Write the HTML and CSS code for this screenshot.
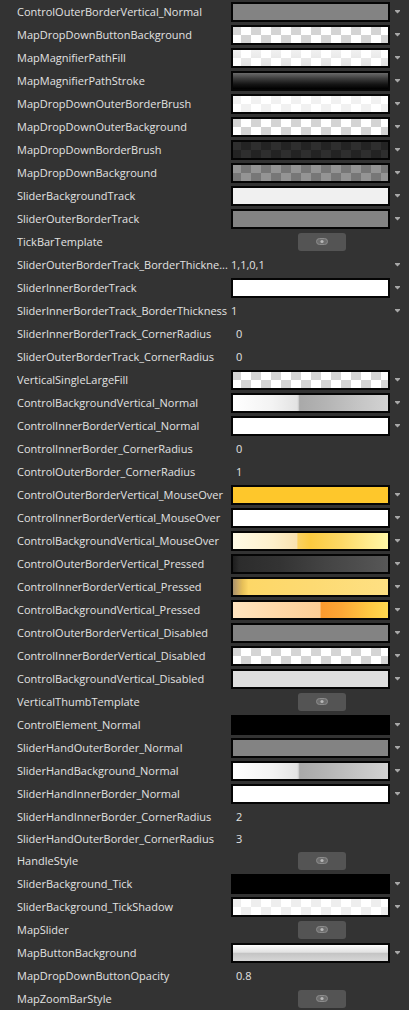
FILE: index.html
```html
<!DOCTYPE html>
<html>
<head>
<meta charset="utf-8">
<link rel="stylesheet" href="styles.css">
</head>
<body>
<div class="list">
  <div class="row"><span class="label">ControlOuterBorderVertical_Normal</span><span class="sw gray"></span><svg class="arrow" viewBox="0 0 5 4"><path d="M0 0H5V1L2.5 3.5L0 1Z"/></svg></div>
  <div class="row"><span class="label">MapDropDownButtonBackground</span><span class="sw chk"></span><svg class="arrow" viewBox="0 0 5 4"><path d="M0 0H5V1L2.5 3.5L0 1Z"/></svg></div>
  <div class="row"><span class="label">MapMagnifierPathFill</span><span class="sw chk-fade"></span><svg class="arrow" viewBox="0 0 5 4"><path d="M0 0H5V1L2.5 3.5L0 1Z"/></svg></div>
  <div class="row"><span class="label">MapMagnifierPathStroke</span><span class="sw stroke"></span><svg class="arrow" viewBox="0 0 5 4"><path d="M0 0H5V1L2.5 3.5L0 1Z"/></svg></div>
  <div class="row"><span class="label">MapDropDownOuterBorderBrush</span><span class="sw chk-faint"></span><svg class="arrow" viewBox="0 0 5 4"><path d="M0 0H5V1L2.5 3.5L0 1Z"/></svg></div>
  <div class="row"><span class="label">MapDropDownOuterBackground</span><span class="sw chk"></span><svg class="arrow" viewBox="0 0 5 4"><path d="M0 0H5V1L2.5 3.5L0 1Z"/></svg></div>
  <div class="row"><span class="label">MapDropDownBorderBrush</span><span class="sw chk-dark"></span><svg class="arrow" viewBox="0 0 5 4"><path d="M0 0H5V1L2.5 3.5L0 1Z"/></svg></div>
  <div class="row"><span class="label">MapDropDownBackground</span><span class="sw chk-mid"></span><svg class="arrow" viewBox="0 0 5 4"><path d="M0 0H5V1L2.5 3.5L0 1Z"/></svg></div>
  <div class="row"><span class="label">SliderBackgroundTrack</span><span class="sw offwhite"></span><svg class="arrow" viewBox="0 0 5 4"><path d="M0 0H5V1L2.5 3.5L0 1Z"/></svg></div>
  <div class="row"><span class="label">SliderOuterBorderTrack</span><span class="sw gray"></span><svg class="arrow" viewBox="0 0 5 4"><path d="M0 0H5V1L2.5 3.5L0 1Z"/></svg></div>
  <div class="row"><span class="label">TickBarTemplate</span><span class="btn"><svg class="btn-icon" viewBox="0 0 12 7"><rect x="0.5" y="0.5" width="11" height="6" rx="3" class="pill"/><circle cx="6" cy="3.5" r="1.6" class="dot"/></svg></span></div>
  <div class="row"><span class="label">SliderOuterBorderTrack_BorderThickne...</span><span class="val dd">1,1,0,1</span><svg class="arrow" viewBox="0 0 5 4"><path d="M0 0H5V1L2.5 3.5L0 1Z"/></svg></div>
  <div class="row"><span class="label">SliderInnerBorderTrack</span><span class="sw white"></span><svg class="arrow" viewBox="0 0 5 4"><path d="M0 0H5V1L2.5 3.5L0 1Z"/></svg></div>
  <div class="row"><span class="label">SliderInnerBorderTrack_BorderThickness</span><span class="val dd">1</span><svg class="arrow" viewBox="0 0 5 4"><path d="M0 0H5V1L2.5 3.5L0 1Z"/></svg></div>
  <div class="row"><span class="label">SliderInnerBorderTrack_CornerRadius</span><span class="val num">0</span></div>
  <div class="row"><span class="label">SliderOuterBorderTrack_CornerRadius</span><span class="val num">0</span></div>
  <div class="row"><span class="label">VerticalSingleLargeFill</span><span class="sw chk"></span><svg class="arrow" viewBox="0 0 5 4"><path d="M0 0H5V1L2.5 3.5L0 1Z"/></svg></div>
  <div class="row"><span class="label">ControlBackgroundVertical_Normal</span><span class="sw grad-normal"></span><svg class="arrow" viewBox="0 0 5 4"><path d="M0 0H5V1L2.5 3.5L0 1Z"/></svg></div>
  <div class="row"><span class="label">ControlInnerBorderVertical_Normal</span><span class="sw white"></span><svg class="arrow" viewBox="0 0 5 4"><path d="M0 0H5V1L2.5 3.5L0 1Z"/></svg></div>
  <div class="row"><span class="label">ControlInnerBorder_CornerRadius</span><span class="val num">0</span></div>
  <div class="row"><span class="label">ControlOuterBorder_CornerRadius</span><span class="val num">1</span></div>
  <div class="row"><span class="label">ControlOuterBorderVertical_MouseOver</span><span class="sw yellow"></span><svg class="arrow" viewBox="0 0 5 4"><path d="M0 0H5V1L2.5 3.5L0 1Z"/></svg></div>
  <div class="row"><span class="label">ControlInnerBorderVertical_MouseOver</span><span class="sw white"></span><svg class="arrow" viewBox="0 0 5 4"><path d="M0 0H5V1L2.5 3.5L0 1Z"/></svg></div>
  <div class="row"><span class="label">ControlBackgroundVertical_MouseOver</span><span class="sw grad-over"></span><svg class="arrow" viewBox="0 0 5 4"><path d="M0 0H5V1L2.5 3.5L0 1Z"/></svg></div>
  <div class="row"><span class="label">ControlOuterBorderVertical_Pressed</span><span class="sw grad-dark"></span><svg class="arrow" viewBox="0 0 5 4"><path d="M0 0H5V1L2.5 3.5L0 1Z"/></svg></div>
  <div class="row"><span class="label">ControlInnerBorderVertical_Pressed</span><span class="sw grad-inner-pressed"></span><svg class="arrow" viewBox="0 0 5 4"><path d="M0 0H5V1L2.5 3.5L0 1Z"/></svg></div>
  <div class="row"><span class="label">ControlBackgroundVertical_Pressed</span><span class="sw grad-pressed"></span><svg class="arrow" viewBox="0 0 5 4"><path d="M0 0H5V1L2.5 3.5L0 1Z"/></svg></div>
  <div class="row"><span class="label">ControlOuterBorderVertical_Disabled</span><span class="sw gray"></span><svg class="arrow" viewBox="0 0 5 4"><path d="M0 0H5V1L2.5 3.5L0 1Z"/></svg></div>
  <div class="row"><span class="label">ControlInnerBorderVertical_Disabled</span><span class="sw chk"></span><svg class="arrow" viewBox="0 0 5 4"><path d="M0 0H5V1L2.5 3.5L0 1Z"/></svg></div>
  <div class="row"><span class="label">ControlBackgroundVertical_Disabled</span><span class="sw lightgray"></span><svg class="arrow" viewBox="0 0 5 4"><path d="M0 0H5V1L2.5 3.5L0 1Z"/></svg></div>
  <div class="row"><span class="label">VerticalThumbTemplate</span><span class="btn"><svg class="btn-icon" viewBox="0 0 12 7"><rect x="0.5" y="0.5" width="11" height="6" rx="3" class="pill"/><circle cx="6" cy="3.5" r="1.6" class="dot"/></svg></span></div>
  <div class="row"><span class="label">ControlElement_Normal</span><span class="sw black"></span><svg class="arrow" viewBox="0 0 5 4"><path d="M0 0H5V1L2.5 3.5L0 1Z"/></svg></div>
  <div class="row"><span class="label">SliderHandOuterBorder_Normal</span><span class="sw gray"></span><svg class="arrow" viewBox="0 0 5 4"><path d="M0 0H5V1L2.5 3.5L0 1Z"/></svg></div>
  <div class="row"><span class="label">SliderHandBackground_Normal</span><span class="sw grad-normal"></span><svg class="arrow" viewBox="0 0 5 4"><path d="M0 0H5V1L2.5 3.5L0 1Z"/></svg></div>
  <div class="row"><span class="label">SliderHandInnerBorder_Normal</span><span class="sw white"></span><svg class="arrow" viewBox="0 0 5 4"><path d="M0 0H5V1L2.5 3.5L0 1Z"/></svg></div>
  <div class="row"><span class="label">SliderHandInnerBorder_CornerRadius</span><span class="val num">2</span></div>
  <div class="row short"><span class="label">SliderHandOuterBorder_CornerRadius</span><span class="val num">3</span></div>
  <div class="row"><span class="label">HandleStyle</span><span class="btn"><svg class="btn-icon" viewBox="0 0 12 7"><rect x="0.5" y="0.5" width="11" height="6" rx="3" class="pill"/><circle cx="6" cy="3.5" r="1.6" class="dot"/></svg></span></div>
  <div class="row"><span class="label">SliderBackground_Tick</span><span class="sw black"></span><svg class="arrow" viewBox="0 0 5 4"><path d="M0 0H5V1L2.5 3.5L0 1Z"/></svg></div>
  <div class="row"><span class="label">SliderBackground_TickShadow</span><span class="sw chk-faint2"></span><svg class="arrow" viewBox="0 0 5 4"><path d="M0 0H5V1L2.5 3.5L0 1Z"/></svg></div>
  <div class="row"><span class="label">MapSlider</span><span class="btn"><svg class="btn-icon" viewBox="0 0 12 7"><rect x="0.5" y="0.5" width="11" height="6" rx="3" class="pill"/><circle cx="6" cy="3.5" r="1.6" class="dot"/></svg></span></div>
  <div class="row"><span class="label">MapButtonBackground</span><span class="sw grad-button"></span><svg class="arrow" viewBox="0 0 5 4"><path d="M0 0H5V1L2.5 3.5L0 1Z"/></svg></div>
  <div class="row"><span class="label">MapDropDownButtonOpacity</span><span class="val num">0.8</span></div>
  <div class="row"><span class="label">MapZoomBarStyle</span><span class="btn"><svg class="btn-icon" viewBox="0 0 12 7"><rect x="0.5" y="0.5" width="11" height="6" rx="3" class="pill"/><circle cx="6" cy="3.5" r="1.6" class="dot"/></svg></span></div>
</div>
</body>
</html>
```
FILE: styles.css
```css
html, body {
  margin: 0;
  padding: 0;
  background: #333333;
}
body {
  width: 409px;
  height: 1010px;
  overflow: hidden;
  font-family: "Open Sans", "Noto Sans", sans-serif;
  font-size: 11px;
  color: #e2e2e2;
}
.list {
  display: flex;
  flex-direction: column;
}
.row {
  display: flex;
  align-items: center;
  height: 23px;
}
.row.short {
  height: 21px;
}
.label {
  flex: 0 0 214px;
  margin-left: 17px;
  white-space: nowrap;
  overflow: hidden;
}
.sw {
  flex: 0 0 159px;
  height: 20px;
  box-sizing: border-box;
  border: 2px solid #050505;
}
.val {
  flex: 0 0 159px;
  box-sizing: border-box;
}
.val.num {
  padding-left: 5px;
}
.val.dd {
  padding-left: 0;
}
.arrow {
  width: 5px;
  height: 4px;
  margin-left: 5px;
  fill: #a8a8a8;
}
.btn {
  margin-left: 67px;
  width: 48px;
  height: 18px;
  border-radius: 3px;
  background: #545454;
  display: flex;
  align-items: center;
  justify-content: center;
}
.btn-icon {
  width: 12px;
  height: 7px;
}
.btn-icon .pill {
  fill: #6e6e6e;
  stroke: #8c8c8c;
  stroke-width: 1;
}
.btn-icon .dot {
  fill: #b8b8b8;
}

/* swatches */
.gray { background: #838383; }
.white { background: #ffffff; }
.black { background: #000000; border-color: #000; }
.offwhite { background: #f0f0f0; }
.lightgray { background: #dedede; }
.yellow { background: #fec72b; }

.chk {
  background: repeating-conic-gradient(#d4d4d4 0 25%, #ffffff 0 50%) -12px 0 / 20px 16px;
}
.chk-fade {
  background:
    linear-gradient(rgba(255,255,255,0.55), rgba(255,255,255,0.05)),
    repeating-conic-gradient(#e0e0e0 0 25%, #ffffff 0 50%) -12px 0 / 20px 16px;
}
.chk-faint {
  background: repeating-conic-gradient(#f1f1f1 0 25%, #ffffff 0 50%) -12px 0 / 20px 16px;
}
.chk-faint2 {
  background: repeating-conic-gradient(#eeeeee 0 25%, #ffffff 0 50%) -12px 0 / 20px 16px;
}
.chk-dark {
  background: repeating-conic-gradient(#2e2e2e 0 25%, #232323 0 50%) -12px 0 / 20px 16px;
}
.chk-mid {
  background: repeating-conic-gradient(#949494 0 25%, #777777 0 50%) -12px 0 / 20px 16px;
}
.stroke {
  background: linear-gradient(#6a6a6a 0%, #3c3c3c 35%, #151515 70%, #000000 100%);
}
.grad-normal {
  background: linear-gradient(to right, #ffffff 0%, #f3f3f3 25%, #e3e3e3 41%, #dadada 42%, #a9a9a9 43%, #b4b4b4 60%, #c4c4c4 80%, #d2d2d2 100%);
}
.grad-over {
  background: linear-gradient(to right, #fffae6 0%, #fdf0cc 25%, #f9e2b0 41%, #fbd261 42%, #fccb40 50%, #fdd966 70%, #ffec8f 88%, #fff7a6 100%);
}
.grad-dark {
  background: linear-gradient(to right, #1e1e1e 0%, #2c2c2c 4%, #333333 30%, #444444 60%, #575757 100%);
}
.grad-inner-pressed {
  background: linear-gradient(to right, #a8916b 0%, #c9a866 3%, #e6bf58 6%, #fdd767 10%, #fdda72 50%, #fee083 100%);
}
.grad-pressed {
  background: linear-gradient(to right, #ffe4c0 0%, #ffd8a8 30%, #fccf96 56%, #fb9a2e 57%, #fca736 70%, #ffc843 88%, #ffd950 100%);
}
.grad-button {
  background: linear-gradient(#ffffff 0%, #f2f2f2 15%, #e2e2e2 45%, #c4c4c4 52%, #cdcdcd 75%, #d6d6d6 100%);
}
```
